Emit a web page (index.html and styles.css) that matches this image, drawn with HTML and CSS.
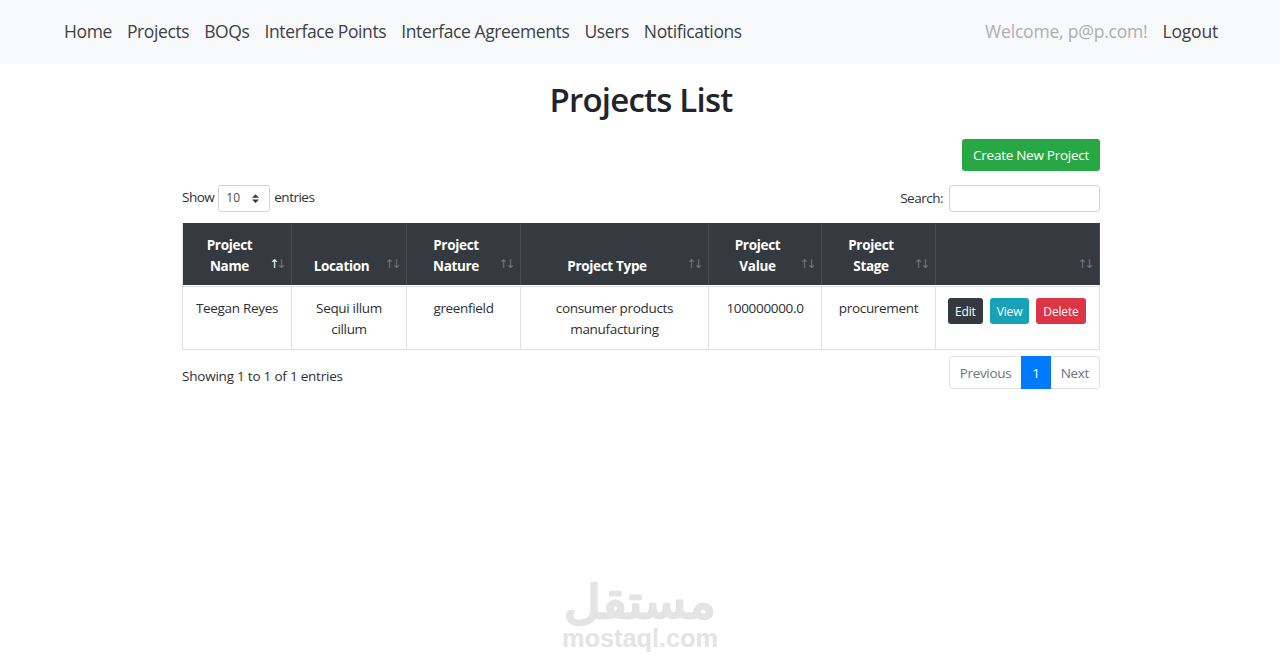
FILE: index.html
```html
<!DOCTYPE html>
<html lang="en">
<head>
  <meta charset="UTF-8" />
  <meta name="viewport" content="width=device-width, initial-scale=1.0"/>
  <title>Projects List</title>
  <link rel="stylesheet" href="styles.css">
</head>
<body>

  <nav class="navbar">
    <div class="nav-links">
      <a href="#">Home</a>
      <a href="#">Projects</a>
      <a href="#">BOQs</a>
      <a href="#">Interface Points</a>
      <a href="#">Interface Agreements</a>
      <a href="#">Users</a>
      <a href="#">Notifications</a>
    </div>
    <div class="nav-links nav-user">
      <span class="welcome">Welcome, p@p.com!</span>
      <a href="#">Logout</a>
    </div>
  </nav>

  <main class="container">
    <h1>Projects List</h1>

    <div class="actions">
      <a href="#" class="btn btn-success">Create New Project</a>
    </div>

    <div class="table-controls">
      <div class="length">
        <span>Show</span>
        <button type="button" class="length-select">
          10
          <svg width="7" height="9" viewBox="0 0 4 5"><path fill="#343a40" d="M2 0L0 2h4zm0 5L0 3h4z"/></svg>
        </button>
        <span>entries</span>
      </div>
      <label class="search">Search: <input type="text"></label>
    </div>

    <table class="projects">
      <colgroup>
        <col class="c-name"><col class="c-location"><col class="c-nature"><col class="c-type">
        <col class="c-value"><col class="c-stage"><col class="c-actions">
      </colgroup>
      <thead>
        <tr>
          <th class="asc">Project<br>Name</th>
          <th>Location</th>
          <th>Project<br>Nature</th>
          <th>Project Type</th>
          <th>Project<br>Value</th>
          <th>Project<br>Stage</th>
          <th></th>
        </tr>
      </thead>
      <tbody>
        <tr>
          <td>Teegan Reyes</td>
          <td>Sequi illum<br>cillum</td>
          <td>greenfield</td>
          <td>consumer products<br>manufacturing</td>
          <td>100000000.0</td>
          <td>procurement</td>
          <td>
            <div class="row-actions">
              <a href="#" class="btn-sm btn-dark">Edit</a>
              <a href="#" class="btn-sm btn-info">View</a>
              <a href="#" class="btn-sm btn-danger">Delete</a>
            </div>
          </td>
        </tr>
      </tbody>
    </table>

    <div class="table-footer">
      <div class="info">Showing 1 to 1 of 1 entries</div>
      <div class="pagination">
        <a href="#">Previous</a>
        <a href="#" class="active">1</a>
        <a href="#">Next</a>
      </div>
    </div>
  </main>

  <footer class="brand">
    <svg width="160" height="96" viewBox="0 -20 160 96">
      <text class="brand-ar" x="80" y="41" text-anchor="middle" textLength="152" lengthAdjust="spacingAndGlyphs" direction="rtl">مستقل</text>
      <text class="brand-en" x="2" y="70" textLength="156" lengthAdjust="spacingAndGlyphs">mostaql.com</text>
    </svg>
  </footer>

</body>
</html>
```
FILE: styles.css
```css
* {
  box-sizing: border-box;
}
body {
  margin: 0;
  min-height: 665px;
  display: flex;
  flex-direction: column;
  font-family: "Segoe UI", "Open Sans", sans-serif;
  font-size: 13.5px;
  line-height: 20.5px;
  letter-spacing: -0.024em;
  color: #2c3034;
  background: #fff;
}
a {
  text-decoration: none;
}

/* navbar */
.navbar {
  display: flex;
  justify-content: space-between;
  align-items: center;
  height: 64px;
  padding: 0 62px 1px 64px;
  background: #f8f9fb;
  font-size: 17.5px;
}
.nav-links {
  display: flex;
  gap: 15px;
  letter-spacing: -0.39px;
}
.nav-user {
  letter-spacing: -0.2px;
}
.nav-links a {
  color: #3c4146;
}
.nav-links .welcome {
  color: #adafb1;
}

.container {
  width: 918px;
  margin-left: 182px;
}
h1 {
  margin: 16px 0 19px;
  font-size: 33px;
  font-weight: 600;
  line-height: 40px;
  letter-spacing: -0.8px;
  text-align: center;
  color: #212529;
}
.actions {
  display: flex;
  justify-content: flex-end;
}
.btn {
  height: 32px;
  padding: 0 11px;
  border-radius: 3px;
  line-height: 32px;
  letter-spacing: -0.02em;
  color: #fff;
}
.btn-success {
  background: #28a745;
}

/* length + search */
.table-controls {
  display: flex;
  justify-content: space-between;
  margin: 14px 0 11px;
}
.length,
.search {
  display: flex;
  align-items: center;
  height: 27px;
}
.length {
  gap: 4px;
  letter-spacing: -0.5px;
}
.length > span {
  padding-bottom: 2px;
}
.length-select {
  display: flex;
  justify-content: space-between;
  align-items: center;
  width: 52px;
  height: 27px;
  padding: 0 10px 0 7px;
  border: 1px solid #ced4da;
  border-radius: 3px;
  background: #fff;
  font: inherit;
  font-size: 12px;
  color: #495057;
}
.search {
  letter-spacing: -0.5px;
}
.search input {
  width: 151px;
  height: 27px;
  margin-left: 6px;
  border: 1px solid #ced4da;
  border-radius: 3px;
}

/* table */
.projects {
  width: 918px;
  table-layout: fixed;
  border-collapse: separate;
  border-spacing: 0;
  border: 1px solid #dee2e6;
  border-width: 0 0 0 1px;
  text-align: center;
}
.c-name { width: 109px; }
.c-location { width: 115px; }
.c-nature { width: 114px; }
.c-type { width: 188px; }
.c-value { width: 113px; }
.c-stage { width: 114px; }
.c-actions { width: 164px; }
.projects th {
  position: relative;
  height: 62px;
  padding: 11px 26px 9px 11px;
  border-right: 1px solid #454d55;
  background: #343a40;
  color: #fff;
  font-weight: 700;
  vertical-align: bottom;
}
.projects th::before,
.projects th::after {
  position: absolute;
  bottom: 11px;
  font-family: "DejaVu Sans", sans-serif;
  font-size: 12px;
  font-weight: 400;
  opacity: 0.3;
}
.projects th::before {
  content: "\2191";
  right: 12px;
}
.projects th::after {
  content: "\2193";
  right: 5px;
}
.projects th.asc::before {
  opacity: 1;
}
.projects td {
  height: 64px;
  padding: 11px 0 0;
  border: 1px solid #dee2e6;
  border-left: 0;
  vertical-align: top;
}
/* thin gap between the dark header and the first row line */
.projects thead::after {
  content: "";
  display: table-row;
  height: 1px;
}
.row-actions {
  display: flex;
  gap: 7px;
  padding-left: 12px;
}
.btn-sm {
  height: 26px;
  padding: 0 7px;
  border-radius: 3px;
  font-size: 12px;
  line-height: 27px;
  letter-spacing: -0.15px;
  color: #fff;
}
.btn-dark { background: #343a40; }
.btn-info { background: #17a2b8; }
.btn-danger { background: #dc3545; }

/* info + pagination */
.table-footer {
  display: flex;
  justify-content: space-between;
  padding-top: 6px;
}
.info {
  padding-top: 10px;
  letter-spacing: -0.22px;
}
.pagination {
  display: flex;
  height: 33px;
  border: 1px solid #dee2e6;
  border-radius: 3px;
}
.pagination a {
  padding: 0 10px;
  line-height: 32px;
  color: #6c757d;
}
.pagination .active {
  margin: -1px 0;
  padding: 0 11px;
  line-height: 34px;
  background: #007bff;
  color: #fff;
}

.brand {
  display: flex;
  justify-content: center;
  margin-top: auto;
  padding-bottom: 12px;
}
.brand text {
  fill: #e4e4e4;
  letter-spacing: 0;
}
.brand-ar {
  font-family: "DejaVu Sans", sans-serif;
  font-size: 46px;
  stroke: #e4e4e4;
  stroke-width: 2.5px;
  stroke-linejoin: round;
}
.brand-en {
  font-family: "Liberation Sans", Arial, sans-serif;
  font-size: 25px;
  font-weight: 700;
}
```
